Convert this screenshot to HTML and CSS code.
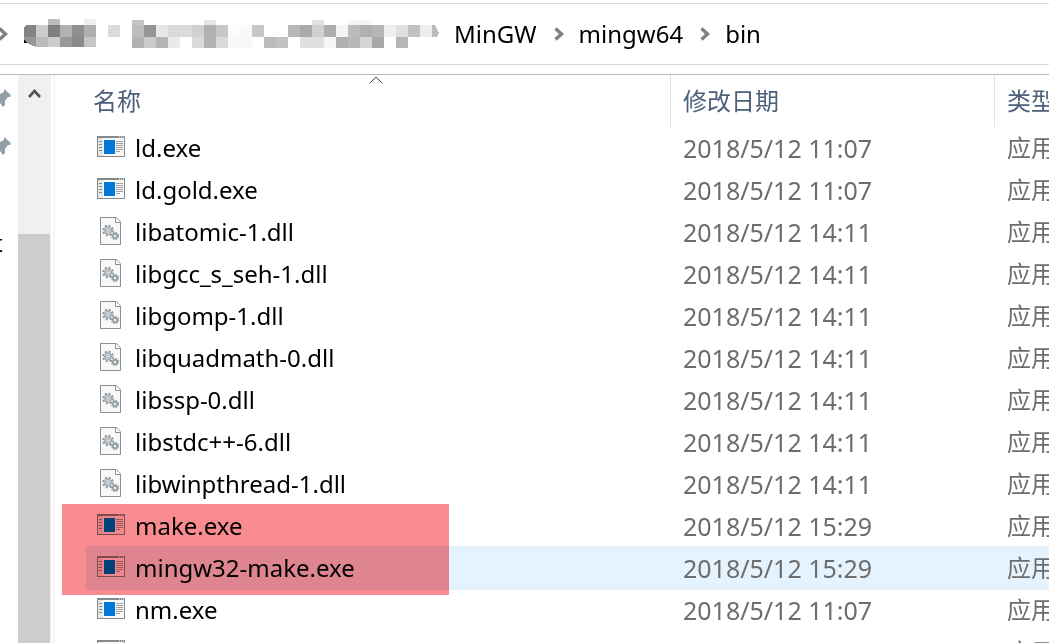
FILE: index.html
```html
<!DOCTYPE html>
<html lang="zh-CN">
<head>
  <meta charset="UTF-8">
  <meta name="viewport" content="width=device-width, initial-scale=1.0">
  <title>bin</title>
  <link rel="stylesheet" href="styles.css">
</head>
<body>

  <!-- shared icons -->
  <svg class="sprite" width="0" height="0">
    <symbol id="icon-exe" viewBox="0 0 28 21">
      <rect x="0" y="0" width="28" height="21" fill="#84898c"/>
      <rect x="1" y="2" width="26" height="18" fill="#f8f8f8"/>
      <path d="M22 1h1M24 1h1M26 1h1" stroke="#fff" stroke-width="1"/>
      <rect x="1" y="2" width="5" height="18" fill="#e6e8e8"/>
      <path d="M2 5.500h3M2 8.500h3M2 11.500h3M2 14.500h3" stroke="#84898c"/>
      <rect x="7" y="4" width="11" height="14" fill="#0078d7"/>
      <path d="M19 5.500h7M19 7.500h7M19 9.500h7M19 11.500h7M19 13.500h7M19 15.500h4" stroke="#9a9ea0"/>
    </symbol>
    <symbol id="icon-dll" viewBox="0 0 28 28">
      <path d="M3.500.5h16l4 4.500v22.500h-20z" fill="#f8f8f8" stroke="#8b8f91"/>
      <path d="M18.500.5v5h5" fill="#fff" stroke="#8b8f91"/>
      <circle cx="11" cy="13.500" r="4.800" fill="none" stroke="#8d9499" stroke-width="2" stroke-dasharray="2 1.770"/>
      <circle cx="11" cy="13.500" r="3.200" fill="#e4eaee" stroke="#a3adb3" stroke-width="1.600"/>
      <circle cx="11" cy="13.500" r="1.300" fill="#fff" stroke="#8d9499" stroke-width=".8"/>
      <circle cx="18" cy="19" r="3.200" fill="none" stroke="#858d92" stroke-width="1.600" stroke-dasharray="1.500 1.010"/>
      <circle cx="18" cy="19" r="2.200" fill="#c8d5dd" stroke="#929ca2" stroke-width="1.400"/>
      <circle cx="18" cy="19" r=".9" fill="#f8f8f8"/>
    </symbol>
    <symbol id="icon-pin" viewBox="0 0 11 19">
      <path d="M4 0l7 6-1 2-2 0-3 4 0 4-2 2-3-4v-9l4-2z" fill="#949fa6"/>
    </symbol>
    <symbol id="icon-chevron" viewBox="0 0 10 14">
      <path d="M1.500 1.500L7.500 7l-6 5.500" fill="none" stroke="#808080" stroke-width="3.400"/>
    </symbol>
  </svg>

  <nav class="address">
    <svg class="chevron" width="10" height="14"><use href="#icon-chevron"/></svg>
    <svg class="masked" width="416" height="30" viewBox="24 20 416 30" shape-rendering="crispEdges">
      <path d="M48 20h12v6h-12z" fill="#bdbdbd"/>
      <path d="M84 20h12v6h-12z" fill="#efefef"/>
      <path d="M132 21h12v5h-12z" fill="#c5c5c5"/>
      <path d="M204 21h12v5h-12z" fill="#e5e5e5"/>
      <path d="M312 21h12v5h-12z" fill="#e0e0e0"/>
      <path d="M348 21h24v5h-24z" fill="#f4f4f4"/>
      <path d="M26 26h10v12h-12v-10z" fill="#838383"/>
      <path d="M36 26h12v12h-12z" fill="#cbcbcb"/>
      <path d="M48 26h12v12h-12z" fill="#808080"/>
      <path d="M60 26h12v12h-12z" fill="#b2b2b2"/>
      <path d="M72 26h12v12h-12z" fill="#8f8f8f"/>
      <path d="M84 26h12v12h-12z" fill="#b0b0b0"/>
      <path d="M108 26h12v12h-12z" fill="#dbdbdb"/>
      <path d="M132 26h12v12h-12z" fill="#bdbdbd"/>
      <path d="M144 26h12v12h-12z" fill="#959595"/>
      <path d="M156 26h12v12h-12z" fill="#e7e7e7"/>
      <path d="M168 26h24v12h-24z" fill="#dadada"/>
      <path d="M192 26h12v12h-12z" fill="#d0d0d0"/>
      <path d="M204 26h12v12h-12z" fill="#b0b0b0"/>
      <path d="M216 26h12v12h-12z" fill="#c7c7c7"/>
      <path d="M228 26h12v12h-12z" fill="#fcfcfc"/>
      <path d="M240 26h12v12h-12z" fill="#f9f9f9"/>
      <path d="M252 26h12v12h-12z" fill="#c7c7c7"/>
      <path d="M288 26h12v12h-12z" fill="#b8b8b8"/>
      <path d="M300 26h12v12h-12z" fill="#a9a9a9"/>
      <path d="M312 26h12v12h-12z" fill="#d0d0d0"/>
      <path d="M324 26h12v12h-12z" fill="#aeaeae"/>
      <path d="M336 26h12v12h-12z" fill="#f4f4f4"/>
      <path d="M348 26h12v12h-12z" fill="#bbbbbb"/>
      <path d="M360 26h12v12h-12z" fill="#b0b0b0"/>
      <path d="M372 26h12v12h-12z" fill="#b6b6b6"/>
      <path d="M384 26h12v12h-12z" fill="#efefef"/>
      <path d="M396 26h12v12h-12z" fill="#e0e0e0"/>
      <path d="M408 26h12v12h-12z" fill="#c2c2c2"/>
      <path d="M420 26h12v12h-12z" fill="#ededed"/>
      <path d="M432 26h3l4 8-2 4h-5z" fill="#bbbbbb"/>
      <path d="M24 38h12v10q-8-2-12-8z" fill="#969696"/>
      <path d="M23 44l2-4 1 3 1 0-1 1z" fill="#000"/>
      <path d="M36 38h12v10h-12z" fill="#bbbbbb"/>
      <path d="M48 38h12v10h-12z" fill="#cccccc"/>
      <path d="M60 38h12v10h-12z" fill="#999999"/>
      <path d="M72 38h12v10h-12z" fill="#8a8a8a"/>
      <path d="M84 38h12v10h-12z" fill="#c5c5c5"/>
      <path d="M132 38h12v11h-12z" fill="#b2b2b2"/>
      <path d="M144 38h12v11h-12z" fill="#cbcbcb"/>
      <path d="M156 38h12v11h-12z" fill="#b4b4b4"/>
      <path d="M168 38h12v11h-12z" fill="#eaeaea"/>
      <path d="M192 38h12v11h-12z" fill="#dadada"/>
      <path d="M204 38h12v11h-12z" fill="#b2b2b2"/>
      <path d="M216 38h12v11h-12z" fill="#dadada"/>
      <path d="M228 38h24v11h-24z" fill="#f8f8f8"/>
      <path d="M264 38h12v11h-12z" fill="#bbbbbb"/>
      <path d="M276 38h12v11h-12z" fill="#c2c2c2"/>
      <path d="M300 38h24v11h-24z" fill="#e0e0e0"/>
      <path d="M324 38h12v11h-12z" fill="#f6f6f6"/>
      <path d="M336 38h12v11h-12z" fill="#b0b0b0"/>
      <path d="M348 38h12v11h-12z" fill="#b8b8b8"/>
      <path d="M360 38h12v11h-12z" fill="#d6d6d6"/>
      <path d="M372 38h12v11h-12z" fill="#a9a9a9"/>
      <path d="M396 38h12v11h-12z" fill="#b6b6b6"/>
    </svg>
    <a class="crumb" href="#">MinGW</a>
    <svg class="chevron" width="10" height="14"><use href="#icon-chevron"/></svg>
    <a class="crumb" href="#">mingw64</a>
    <svg class="chevron" width="10" height="14"><use href="#icon-chevron"/></svg>
    <a class="crumb" href="#">bin</a>
  </nav>

  <div class="explorer">
    <aside class="tree">
      <svg class="pin" width="11" height="19"><use href="#icon-pin"/></svg>
      <svg class="pin" width="11" height="19"><use href="#icon-pin"/></svg>
      <span class="tree-item">t</span>
    </aside>

    <div class="scrollbar">
      <button class="scroll-up" type="button" aria-label="向上滚动">
        <svg width="13" height="11" viewBox="0 0 13 11"><path d="M1 9l5.500-6 5.500 6" fill="none" stroke="#555" stroke-width="2.600"/></svg>
      </button>
      <div class="thumb"></div>
    </div>

    <main class="files">
      <table class="list">
        <colgroup>
          <col class="col-name">
          <col class="col-date">
          <col class="col-type">
        </colgroup>
        <thead>
          <tr>
            <th>名称
              <svg class="sort" width="14" height="8" viewBox="0 0 14 8"><path d="M.5 7.500L7 1l6.500 6.500" fill="none" stroke="#444"/></svg>
            </th>
            <th>修改日期</th>
            <th>类型</th>
          </tr>
        </thead>
        <tbody>
          <tr><td><div class="file"><svg class="icon exe"><use href="#icon-exe"/></svg>ld.exe</div></td><td class="date">2018/5/12 11:07</td><td>应用程序</td></tr>
          <tr><td><div class="file"><svg class="icon exe"><use href="#icon-exe"/></svg>ld.gold.exe</div></td><td class="date">2018/5/12 11:07</td><td>应用程序</td></tr>
          <tr><td><div class="file"><svg class="icon"><use href="#icon-dll"/></svg>libatomic-1.dll</div></td><td class="date">2018/5/12 14:11</td><td>应用程序</td></tr>
          <tr><td><div class="file"><svg class="icon"><use href="#icon-dll"/></svg>libgcc_s_seh-1.dll</div></td><td class="date">2018/5/12 14:11</td><td>应用程序</td></tr>
          <tr><td><div class="file"><svg class="icon"><use href="#icon-dll"/></svg>libgomp-1.dll</div></td><td class="date">2018/5/12 14:11</td><td>应用程序</td></tr>
          <tr><td><div class="file"><svg class="icon"><use href="#icon-dll"/></svg>libquadmath-0.dll</div></td><td class="date">2018/5/12 14:11</td><td>应用程序</td></tr>
          <tr><td><div class="file"><svg class="icon"><use href="#icon-dll"/></svg>libssp-0.dll</div></td><td class="date">2018/5/12 14:11</td><td>应用程序</td></tr>
          <tr><td><div class="file"><svg class="icon"><use href="#icon-dll"/></svg>libstdc++-6.dll</div></td><td class="date">2018/5/12 14:11</td><td>应用程序</td></tr>
          <tr><td><div class="file"><svg class="icon"><use href="#icon-dll"/></svg>libwinpthread-1.dll</div></td><td class="date">2018/5/12 14:11</td><td>应用程序</td></tr>
          <tr><td><div class="file"><svg class="icon exe"><use href="#icon-exe"/></svg>make.exe</div></td><td class="date">2018/5/12 15:29</td><td>应用程序</td></tr>
          <tr class="hover"><td><div class="file"><svg class="icon exe"><use href="#icon-exe"/></svg>mingw32-make.exe</div></td><td class="date">2018/5/12 15:29</td><td>应用程序</td></tr>
          <tr><td><div class="file"><svg class="icon exe"><use href="#icon-exe"/></svg>nm.exe</div></td><td class="date">2018/5/12 11:07</td><td>应用程序</td></tr>
          <tr><td><div class="file"><svg class="icon exe"><use href="#icon-exe"/></svg>objcopy.exe</div></td><td class="date">2018/5/12 11:07</td><td>应用程序</td></tr>
        </tbody>
      </table>
      <div class="marker"></div>
    </main>
  </div>

</body>
</html>
```

FILE: styles.css
```css
* {
  box-sizing: border-box;
}
body {
  margin: 0;
  height: 100vh;
  overflow: hidden;
  display: flex;
  flex-direction: column;
  background: #fff;
  color: #000;
  font-family: "Noto Sans", "Noto Sans CJK SC", sans-serif;
  font-size: 24px;
  line-height: 32px;
}
.sprite {
  position: absolute;
}

/* address bar */
.address {
  display: flex;
  align-items: center;
  height: 62px;
  margin-top: 3px;
  border-top: 1px solid #d9d9d9;
  border-bottom: 1px solid #d9d9d9;
}
.address .chevron {
  flex: none;
  margin: 0 15px 0 17px;
}
.address .chevron:first-child {
  margin: 0 16px 0 -2px;
}
.masked {
  flex: none;
  margin-right: 14px;
}
.crumb {
  color: #000;
  text-decoration: none;
}

/* panes */
.explorer {
  flex: 1;
  min-height: 0;
  display: flex;
  margin-top: 9px;
  border-top: 1px solid #b9b9b9;
}
.tree {
  flex: none;
  display: flex;
  flex-direction: column;
  align-items: flex-start;
  width: 18px;
  padding-top: 14px;
  overflow: hidden;
}
.pin {
  flex: none;
  margin-bottom: 29px;
}
.tree-item {
  margin: 42px 0 0 -6px;
}
.scrollbar {
  flex: none;
  display: flex;
  flex-direction: column;
  width: 33px;
  background: #f0f0f0;
}
.scroll-up {
  height: 36px;
  padding: 0;
  border: 0;
  background: none;
  line-height: 0;
}
.thumb {
  flex: 1;
  margin: 123px 1px 0 0;
  background: #cdcdcd;
}
.files {
  flex: 1;
  min-width: 0;
  position: relative;
  margin-left: 2px;
  padding-left: 32px;
  border-left: 2px solid #f6f6f6;
  overflow: hidden;
}

/* file list */
.list {
  table-layout: fixed;
  width: 1100px;
  border-collapse: separate;
  border-spacing: 0;
}
.col-name {
  width: 584px;
}
.col-date {
  width: 324px;
}
th {
  position: relative;
  height: 52px;
  padding: 0 12px;
  border-right: 1px solid #e2e2e2;
  color: #4c607a;
  font-weight: normal;
  text-align: left;
}
th:first-child {
  padding-left: 6px;
}
.sort {
  position: absolute;
  top: 1px;
  left: 282px;
}
td {
  height: 42px;
  padding: 0 12px;
  color: #6d6d6d;
  white-space: nowrap;
}
td:first-child {
  padding-left: 10px;
  color: #000;
}
td.date {
  font-size: 25px;
}
.file {
  display: flex;
  align-items: center;
  gap: 10px;
}
.icon {
  flex: none;
  width: 28px;
  height: 28px;
  margin-bottom: 2px;
}
.icon.exe {
  height: 21px;
  margin-bottom: 3px;
}
.hover {
  background: #e5f3ff;
  outline: 1px solid #e5f3ff;
}

/* red marker over the two make programs */
.marker {
  position: absolute;
  top: 429px;
  left: 7px;
  width: 387px;
  height: 91px;
  background: #f88c8f;
  mix-blend-mode: multiply;
}
```
